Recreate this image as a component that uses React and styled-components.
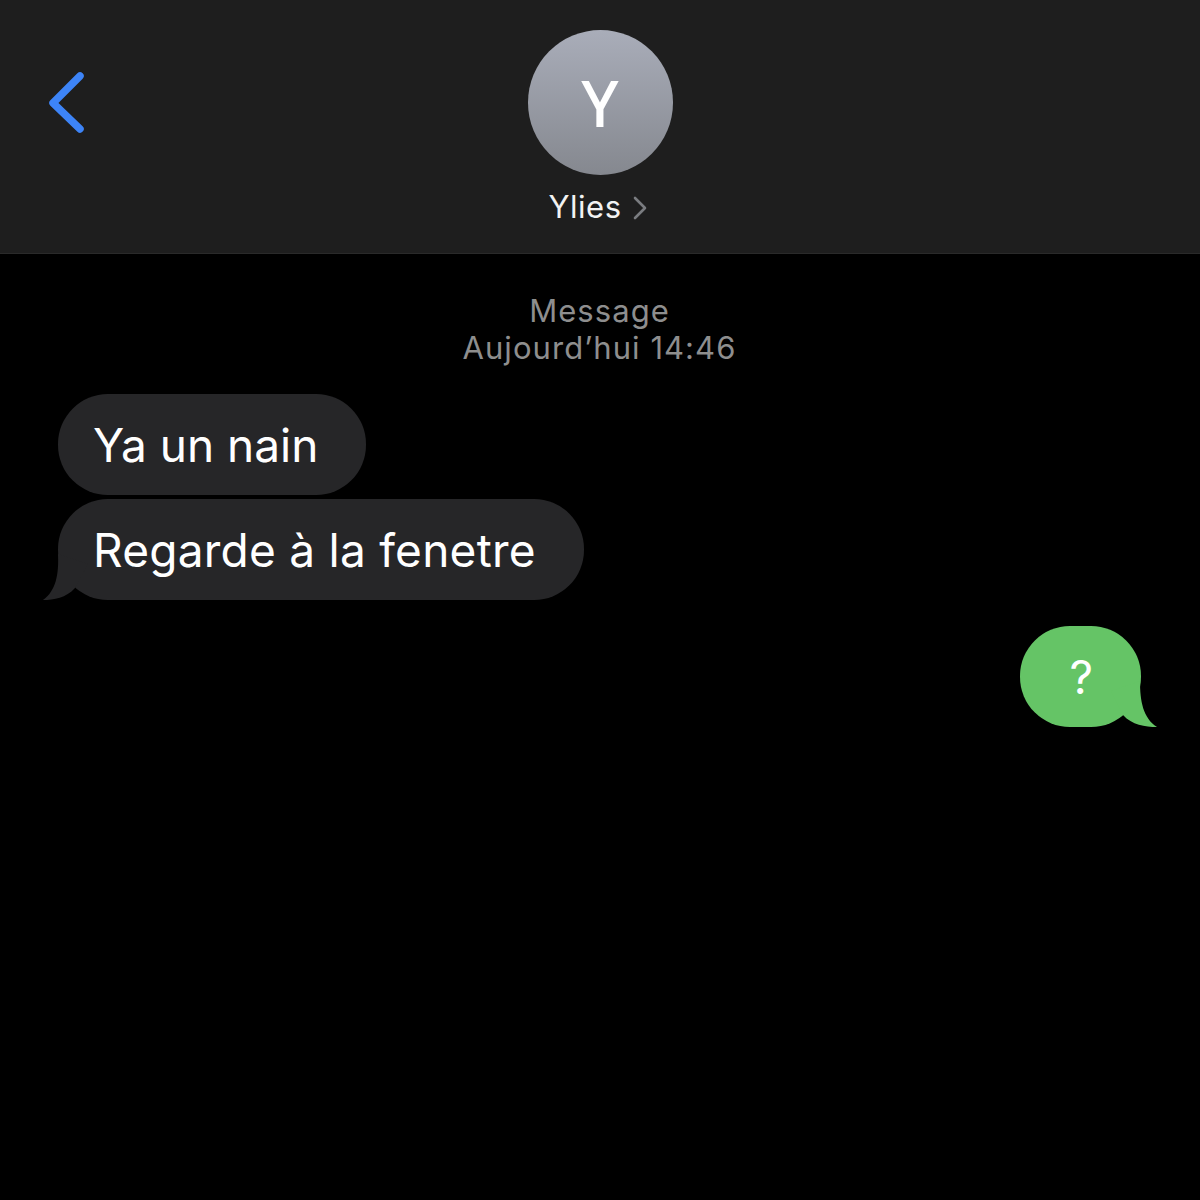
import React from 'react';
import styled, { createGlobalStyle } from 'styled-components';

const Global = createGlobalStyle`
  html, body { margin: 0; padding: 0; background: #000; }
  body { font-family: Inter, "Liberation Sans", sans-serif; -webkit-font-smoothing: antialiased; }
`;

const Page = styled.div`
  width: 1200px;
  height: 1200px;
  background: #000;
  overflow: hidden;
`;

const Header = styled.header`
  box-sizing: border-box;
  height: 254px;
  background: #1e1e1e;
  border-bottom: 1px solid #2a2a2a;
  display: grid;
  grid-template-columns: 1fr auto 1fr;
  padding: 30px 46px 0;
`;

const BackButton = styled.div`
  width: 42px;
  height: 66px;
  margin-top: 40px;
  color: #3d84f7;
`;

const Contact = styled.div`
  display: flex;
  flex-direction: column;
  align-items: center;
`;

const Avatar = styled.div`
  width: 145px;
  height: 145px;
  border-radius: 50%;
  background: linear-gradient(180deg, #a9adb9 0%, #85888f 100%);
  color: #fff;
  display: flex;
  align-items: center;
  justify-content: center;
  font-family: "Noto Sans", sans-serif;
  font-size: 64px;
  font-weight: 500;
  line-height: 1;
`;

const NameRow = styled.div`
  display: flex;
  align-items: center;
  gap: 11px;
  margin-top: 13px;
  margin-left: -5px;
  color: #f2f2f2;
  font-size: 31px;
  line-height: 38px;
  letter-spacing: 0.5px;
`;

const NameChevron = styled.svg`
  width: 14px;
  height: 24px;
  margin-top: 2px;
`;

const Thread = styled.main`
  display: flex;
  flex-direction: column;
  padding: 38px 59px 0 58px;
`;

const Meta = styled.div`
  color: #8e8e8e;
  font-size: 31px;
  line-height: 37px;
  letter-spacing: 1.05px;
  text-align: center;
  margin-bottom: 28px;
`;

const Bubble = styled.div`
  position: relative;
  box-sizing: border-box;
  height: 101px;
  display: flex;
  align-items: center;
  align-self: ${p => (p.$out ? 'flex-end' : 'flex-start')};
  padding: 0 48px 0 ${p => (p.$out ? 49 : 35)}px;
  margin-top: ${p => p.$gap}px;
  border-radius: 50px;
  background: ${p => (p.$out ? '#65c466' : '#262628')};
  color: #fff;
  font-size: 46px;
  line-height: 54px;
  letter-spacing: ${p => p.$track || 0}px;
`;

const TailIn = styled.svg`
  position: absolute;
  left: -16px;
  bottom: 0;
  width: 46px;
  height: 46px;
`;

const TailOut = styled.svg`
  position: absolute;
  right: -16px;
  bottom: 0;
  width: 46px;
  height: 46px;
`;

export default function App() {
  return (
    <Page>
      <Global />
      <Header>
        <BackButton>
          <svg width="42" height="66" viewBox="0 0 42 66" fill="none">
            <path d="M34 6 L7 33 L34 59" stroke="currentColor" strokeWidth="7.5" strokeLinecap="round" strokeLinejoin="round" />
          </svg>
        </BackButton>
        <Contact>
          <Avatar>Y</Avatar>
          <NameRow>
            Ylies
            <NameChevron viewBox="0 0 14 24" fill="none">
              <path d="M2 2 L12 12 L2 22" stroke="#7a7c80" strokeWidth="2.6" strokeLinecap="round" strokeLinejoin="round" />
            </NameChevron>
          </NameRow>
        </Contact>
        <div />
      </Header>
      <Thread>
        <Meta>
          Message
          <br />
          Aujourd’hui 14:46
        </Meta>
        <Bubble $gap={0}>Ya un nain</Bubble>
        <Bubble $gap={4} $track={0.25}>
          Regarde à la fenetre
          <TailIn viewBox="0 0 46 46">
            <path d="M16 0 C17 20 14 37 1 46 C12 46 24 44 33 34 L46 10 L16 0 Z" fill="#262628" />
          </TailIn>
        </Bubble>
        <Bubble $gap={26} $out>
          ?
          <TailOut viewBox="0 0 46 46">
            <path d="M29 0 C29 20 32 37 46 46 C34 46 21 44 12 34 L0 10 Z" fill="#65c466" />
          </TailOut>
        </Bubble>
      </Thread>
    </Page>
  );
}
